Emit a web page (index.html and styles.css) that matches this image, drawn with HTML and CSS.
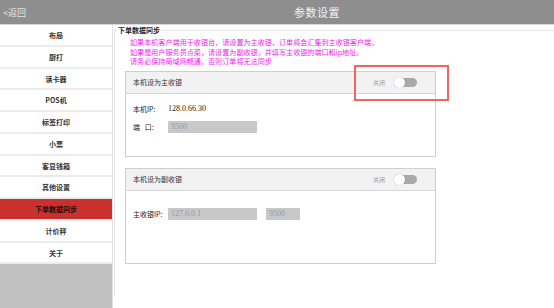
FILE: index.html
```html
<!DOCTYPE html>
<html lang="zh-CN">
<head>
    <meta charset="UTF-8">
    <meta name="viewport" content="width=device-width, initial-scale=1.0">
    <title>参数设置</title>
    <link rel="stylesheet" href="styles.css">
</head>
<body>
    <div class="top-bar">
        <span class="back">&lt;返回</span>
        <span class="title">参数设置</span>
    </div>

    <div class="layout">
        <ul class="side-menu">
            <li>布局</li>
            <li>厨打</li>
            <li>读卡器</li>
            <li>POS机</li>
            <li>标签打印</li>
            <li>小票</li>
            <li>客显钱箱</li>
            <li>其他设置</li>
            <li class="active">下单数据同步</li>
            <li>计价秤</li>
            <li>关于</li>
        </ul>

        <div class="main">
            <fieldset class="group">
                <legend>下单数据同步</legend>
                <div class="notice">
                    <p>如果本机客户端用于收银台，请设置为主收银，订单将会汇集到主收银客户端，</p>
                    <p>如果是用户服务员点菜，请设置为副收银，并填写主收银的端口和ip地址。</p>
                    <p>请务必保持局域网畅通，否则订单将无法同步</p>
                </div>

                <div class="panel panel-main">
                    <div class="panel-head">
                        <span>本机设为主收银</span>
                        <div class="switch-wrap">
                            <span class="switch-label">关闭</span>
                            <span class="switch"><span class="knob"></span></span>
                        </div>
                    </div>
                    <div class="panel-body">
                        <div class="row">
                            <span class="label">本机IP:</span>
                            <span class="value">128.0.66.30</span>
                        </div>
                        <div class="row">
                            <span class="label">端&nbsp;&nbsp;&nbsp;口:</span>
                            <input class="field" type="text" placeholder="9500" disabled>
                        </div>
                    </div>
                </div>

                <div class="panel panel-sub">
                    <div class="panel-head">
                        <span>本机设为副收银</span>
                        <div class="switch-wrap">
                            <span class="switch-label">关闭</span>
                            <span class="switch"><span class="knob"></span></span>
                        </div>
                    </div>
                    <div class="panel-body">
                        <div class="row">
                            <span class="label">主收银IP:</span>
                            <input class="field" type="text" placeholder="127.0.0.1" disabled>
                            <input class="field field-port" type="text" placeholder="9500" disabled>
                        </div>
                    </div>
                </div>
            </fieldset>
        </div>
    </div>

    <!-- 标注框 -->
    <div class="mark"></div>
</body>
</html>
```

FILE: styles.css
```css
body {
    font-family: "Noto Sans CJK SC", "Liberation Sans", sans-serif;
    margin: 0;
    padding: 0;
    background-color: #fff;
    color: #222;
    height: 308px;
    overflow: hidden;
}
.top-bar {
    height: 24px;
    background-color: #8e8e8e;
    border-bottom: 1px solid #d6d6d6;
    display: flex;
    align-items: center;
    position: relative;
}
.back {
    font-size: 9px;
    color: #e4e4e4;
    margin-left: 3px;
}
.title {
    font-size: 11px;
    color: #f2f2f2;
    margin-left: 268px;
    letter-spacing: 0.5px;
}
.layout {
    display: flex;
    height: 283px;
}
.side-menu {
    list-style: none;
    margin: 0;
    padding: 0;
    width: 112px;
    background-color: #c0c0c0;
    border-right: 1px solid #e2e2e2;
    flex-shrink: 0;
}
.side-menu li {
    box-sizing: border-box;
    height: 21.75px;
    background-color: #fff;
    border-bottom: 2px solid #ececec;
    font-size: 7px;
    font-weight: bold;
    color: #333;
    text-align: center;
    line-height: 20px;
}
.side-menu li.active {
    background-color: #c9302e;
    color: #111;
}
.main {
    flex: 1;
}
.group {
    margin: 0 0 0 1px;
    padding: 0 0 0 10px;
    border: 1px solid #e6e6e6;
    border-right: none;
    border-bottom: none;
    height: 270px;
}
.group legend {
    font-size: 7px;
    font-weight: bold;
    color: #222;
    padding: 0 1px;
    margin-left: -8px;
    line-height: 10px;
}
.notice {
    padding: 3px 0 0 5px;
    color: #f01cf0;
    font-size: 7.1px;
    line-height: 9.6px;
}
.notice p {
    margin: 0;
}
.panel {
    width: 309px;
    border: 1px solid #cfcfcf;
}
.panel-main {
    margin-top: 4px;
    height: 84px;
}
.panel-sub {
    margin-top: 11px;
    height: 94px;
}
.panel-head {
    height: 21px;
    background-color: #f2f2f2;
    border-bottom: 1px solid #d8d8d8;
    display: flex;
    align-items: center;
    justify-content: space-between;
    padding: 0 18px 0 7px;
    font-size: 7px;
    color: #333;
}
.switch-wrap {
    display: flex;
    align-items: center;
}
.switch-label {
    font-size: 6px;
    color: #9a9a9a;
    margin-right: 10px;
}
.switch {
    position: relative;
    width: 22px;
    height: 9px;
    border-radius: 5px;
    background-color: #a9a9a9;
}
.knob {
    position: absolute;
    left: -1px;
    top: -1px;
    width: 11px;
    height: 11px;
    border-radius: 50%;
    background-color: #fff;
    box-shadow: 0 0 1px rgba(0, 0, 0, 0.35);
}
.panel-body {
    padding: 6px 0 0 7px;
}
.row {
    display: flex;
    align-items: center;
    height: 18px;
    font-size: 7px;
    color: #222;
}
.panel-sub .panel-body {
    padding-top: 14px;
}
.label {
    width: 35px;
}
.value {
    font-family: "Liberation Serif", serif;
    font-size: 8px;
}
.field {
    box-sizing: border-box;
    width: 89px;
    height: 12px;
    border: none;
    background-color: #c8c8c8;
    font-family: "Liberation Serif", serif;
    font-size: 8px;
    padding: 0 3px;
    margin: 0;
}
.field::placeholder {
    color: #9a9a9a;
}
.field-port {
    width: 34px;
    margin-left: 9px;
}
.mark {
    position: absolute;
    left: 354px;
    top: 65px;
    width: 91px;
    height: 32px;
    border: 2px solid #f26464;
}
```
